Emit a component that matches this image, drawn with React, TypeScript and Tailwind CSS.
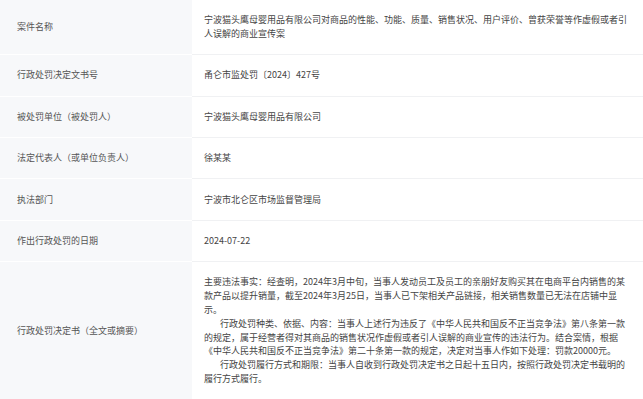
import React from "react";

const rows: { label: string; value: React.ReactNode }[] = [
  {
    label: "案件名称",
    value:
      "宁波猫头鹰母婴用品有限公司对商品的性能、功能、质量、销售状况、用户评价、曾获荣誉等作虚假或者引人误解的商业宣传案",
  },
  { label: "行政处罚决定文书号", value: "甬仑市监处罚〔2024〕427号" },
  { label: "被处罚单位（被处罚人）", value: "宁波猫头鹰母婴用品有限公司" },
  { label: "法定代表人（或单位负责人）", value: "徐某某" },
  { label: "执法部门", value: "宁波市北仑区市场监督管理局" },
  { label: "作出行政处罚的日期", value: "2024-07-22" },
  {
    label: "行政处罚决定书（全文或摘要）",
    value: (
      <>
        <p>
          主要违法事实：经查明，2024年3月中旬，当事人发动员工及员工的亲朋好友购买其在电商平台内销售的某款产品以提升销量，截至2024年3月25日，当事人已下架相关产品链接，相关销售数量已无法在店铺中显示。
        </p>
        <p className="indent-[16px]">
          行政处罚种类、依据、内容：当事人上述行为违反了《中华人民共和国反不正当竞争法》第八条第一款的规定，属于经营者得对其商品的销售状况作虚假或者引人误解的商业宣传的违法行为。结合案情，根据《中华人民共和国反不正当竞争法》第二十条第一款的规定，决定对当事人作如下处理：罚款20000元。
        </p>
        <p className="indent-[16px]">
          行政处罚履行方式和期限：当事人自收到行政处罚决定书之日起十五日内，按照行政处罚决定书载明的履行方式履行。
        </p>
      </>
    ),
  },
];

export default function App() {
  return (
    <div
      className="w-[643px] h-[399px] overflow-hidden bg-white text-[9px] leading-[13.8px]"
      style={{ fontFamily: '"Noto Sans CJK SC", "Noto Sans", sans-serif' }}
    >
      {rows.map((r, i) => (
        <div key={i} className="flex">
          <div className="w-[192px] shrink-0 flex items-center bg-[#f7f8fa] border-b border-white pl-[17px] pr-2 py-[13.3px] text-[#555]">
            {r.label}
          </div>
          <div className="flex-1 min-w-0 pl-3 pr-3 py-[13.3px] border-b border-[#f0f1f3] text-[#444]">
            {r.value}
          </div>
        </div>
      ))}
    </div>
  );
}
